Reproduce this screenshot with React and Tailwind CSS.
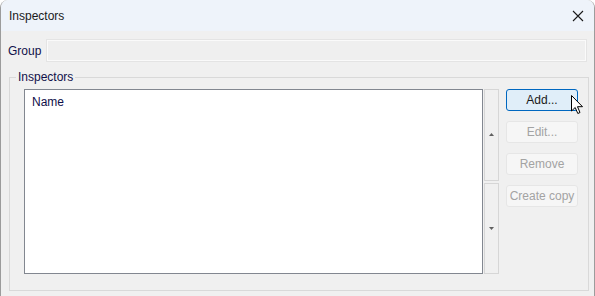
import React from 'react';

const font = { fontFamily: '"Liberation Sans", Arial, sans-serif' };

const Button = ({ children, primary }) => (
  <div
    className={`h-[22px] w-[72px] flex items-center justify-center rounded-[3px] border text-[12px] ${
      primary
        ? 'bg-[#e0eef9] border-[#0067c0] text-[#1a1a1a]'
        : 'bg-[#f6f6f6] border-[#e6e6e6] text-[#a3a3a3]'
    }`}
  >
    {children}
  </div>
);

const App = () => {
  return (
    <div
      className="relative w-[595px] h-[296px] bg-[#f0f0f0] border-x border-[#9c9c9c] rounded-t-[8px] overflow-hidden text-[#10104a]"
      style={font}
    >
      {/* Title bar */}
      <div className="h-[31px] bg-[#eef3fa] flex items-center justify-between pl-[8px] pr-[10px] text-[12px] text-[#1a1a1a]">
        <span>Inspectors</span>
        <svg width="12" height="12" viewBox="0 0 12 12">
          <path d="M1 1 L11 11 M11 1 L1 11" stroke="#1a1a1a" strokeWidth="1.1" />
        </svg>
      </div>

      {/* Group row */}
      <div className="mt-[9px] flex items-center pl-[7px] text-[12px]">
        <span className="w-[39px]">Group</span>
        <div className="w-[539px] h-[21px] bg-[#efefef] border border-[#fafafa] outline outline-[#e4e4e4]" />
      </div>

      {/* Inspectors group box */}
      <fieldset className="mt-[9px] ml-[8px] w-[580px] h-[221px] border border-[#d9d9d9] px-0 pt-[5px]">
        <legend className="ml-[6px] px-[2px] text-[12px] leading-[14px]">Inspectors</legend>
        <div className="flex pl-[14px]">
          <div className="w-[459px] h-[185px] bg-white border border-[#828790] pl-[7px] pt-[3px] text-[12px]">
            Name
          </div>
          <div className="ml-[1px] w-[15px] h-[185px] flex flex-col gap-[2px]">
            <div className="flex-1 border border-[#d6d6d6] flex items-center justify-center">
              <svg width="5" height="3" viewBox="0 0 5 3">
                <path d="M2.5 0 L5 3 L0 3 Z" fill="#606060" />
              </svg>
            </div>
            <div className="flex-1 border border-[#d6d6d6] flex items-center justify-center">
              <svg width="5" height="3" viewBox="0 0 5 3">
                <path d="M0 0 L5 0 L2.5 3 Z" fill="#606060" />
              </svg>
            </div>
          </div>
          <div className="ml-[7px] flex flex-col gap-[10px]">
            <Button primary>Add...</Button>
            <Button>Edit...</Button>
            <Button>Remove</Button>
            <Button>Create copy</Button>
          </div>
        </div>
      </fieldset>

      {/* Mouse cursor */}
      <svg className="absolute left-[570px] top-[95px]" width="13" height="20" viewBox="0 0 13 20">
        <path
          d="M0.5 0.5 L0.5 16 L4.2 12.5 L6.8 18.5 L9 17.5 L6.5 11.7 L11.5 11.7 Z"
          fill="white"
          stroke="black"
          strokeWidth="1"
          strokeLinejoin="round"
        />
      </svg>
    </div>
  );
};

export default App;
